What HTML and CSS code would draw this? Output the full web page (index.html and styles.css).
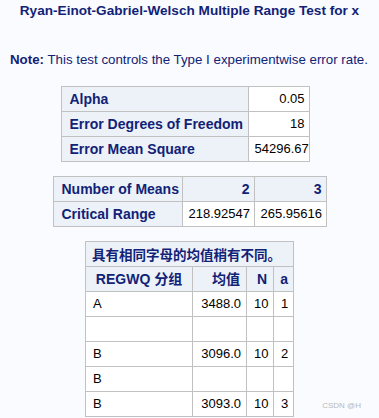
FILE: index.html
```html
<!DOCTYPE html>
<html lang="zh-CN">
<head>
<meta charset="utf-8">
<title>REGWQ</title>
<link rel="stylesheet" href="styles.css">
</head>
<body>
<div class="page">
  <h1 class="title">Ryan-Einot-Gabriel-Welsch Multiple Range Test for x</h1>
  <p class="note"><b>Note:</b> This test controls the Type I experimentwise error rate.</p>

  <table class="grid t-params">
    <colgroup><col class="c1"><col class="c2"></colgroup>
    <tr><th class="rowh">Alpha</th><td class="num">0.05</td></tr>
    <tr><th class="rowh">Error Degrees of Freedom</th><td class="num">18</td></tr>
    <tr><th class="rowh">Error Mean Square</th><td class="num">54296.67</td></tr>
  </table>

  <table class="grid t-range">
    <colgroup><col class="c1"><col class="c2"><col class="c3"></colgroup>
    <tr><th class="rowh">Number of Means</th><th class="num">2</th><th class="num">3</th></tr>
    <tr><th class="rowh">Critical Range</th><td class="num">218.92547</td><td class="num">265.95616</td></tr>
  </table>

  <table class="grid t-groups">
    <colgroup><col class="c1"><col class="c2"><col class="c3"><col class="c4"></colgroup>
    <tr><th class="caption" colspan="4">具有相同字母的均值稍有不同。</th></tr>
    <tr><th class="center">REGWQ 分组</th><th class="num">均值</th><th class="num">N</th><th class="num">a</th></tr>
    <tr><td>A</td><td class="num">3488.0</td><td class="num">10</td><td class="num">1</td></tr>
    <tr><td></td><td></td><td></td><td></td></tr>
    <tr><td>B</td><td class="num">3096.0</td><td class="num">10</td><td class="num">2</td></tr>
    <tr><td>B</td><td></td><td></td><td></td></tr>
    <tr><td>B</td><td class="num">3093.0</td><td class="num">10</td><td class="num">3</td></tr>
  </table>
</div>
<div class="watermark">CSDN @H</div>
</body>
</html>
```

FILE: styles.css
```css
html, body {
  margin: 0;
  padding: 0;
  background: #fafbfe;
  overflow: hidden;
}

body {
  font-family: "Liberation Sans", Arial, "Noto Sans CJK SC", sans-serif;
  font-size: 13px;
  color: #112277;
  width: 379px;
  height: 418px;
  position: relative;
}

.page {
  display: flex;
  flex-direction: column;
  align-items: center;
}

.title {
  margin: 2px 0 0;
  font-size: 13.6px;
  font-weight: bold;
  line-height: 18px;
  text-align: center;
}

.note {
  margin: 31px 0 0;
  font-size: 13.3px;
  line-height: 18px;
  align-self: flex-start;
  padding-left: 10px;
}

.note b { font-weight: bold; }

.grid {
  border-collapse: collapse;
  table-layout: fixed;
  border: 1px solid #c1c1c1;
  margin-top: 14px;
}

.grid th,
.grid td {
  border: 1px solid #c1c1c1;
  height: 25px;
  padding: 0 6px;
  box-sizing: border-box;
  line-height: 16px;
  white-space: nowrap;
  text-align: left;
}

.grid th {
  background: #edf2f9;
  color: #112277;
  font-weight: bold;
  font-size: 14px;
}

.grid td {
  background: #ffffff;
  color: #000000;
  font-weight: normal;
  font-size: 13px;
}

.grid .num { text-align: right; }
.grid .center { text-align: center; }
.grid .rowh { padding-left: 8px; }

.grid .caption {
  font-family: "Noto Sans CJK SC", sans-serif;
  font-size: 13.5px;
  padding-left: 6px;
}

.t-params { margin-top: 17px; width: 248px; margin-left: -9px; }
.t-params .c1 { width: 187px; }
.t-params .c2 { width: 61px; }
.t-params td.num { padding-right: 4px; }

.t-range { width: 273px; }
.t-range .c1 { width: 129px; }
.t-range .c2 { width: 72px; }
.t-range .c3 { width: 72px; }
.t-range .num { padding-right: 4px; }

.t-groups { width: 208px; }
.t-groups .c1 { width: 107px; }
.t-groups .c2 { width: 54px; }
.t-groups .c3 { width: 27px; }
.t-groups .c4 { width: 20px; }

.t-groups td { padding: 0 5px 0 7px; }
.t-groups th.num { padding: 0 6px; }
.t-groups th.num:last-child { padding: 0 5px; }

.watermark {
  position: absolute;
  right: 18px;
  bottom: 8px;
  font-family: "Liberation Sans", Arial, sans-serif;
  font-size: 8px;
  color: #b8b8b8;
}
```
